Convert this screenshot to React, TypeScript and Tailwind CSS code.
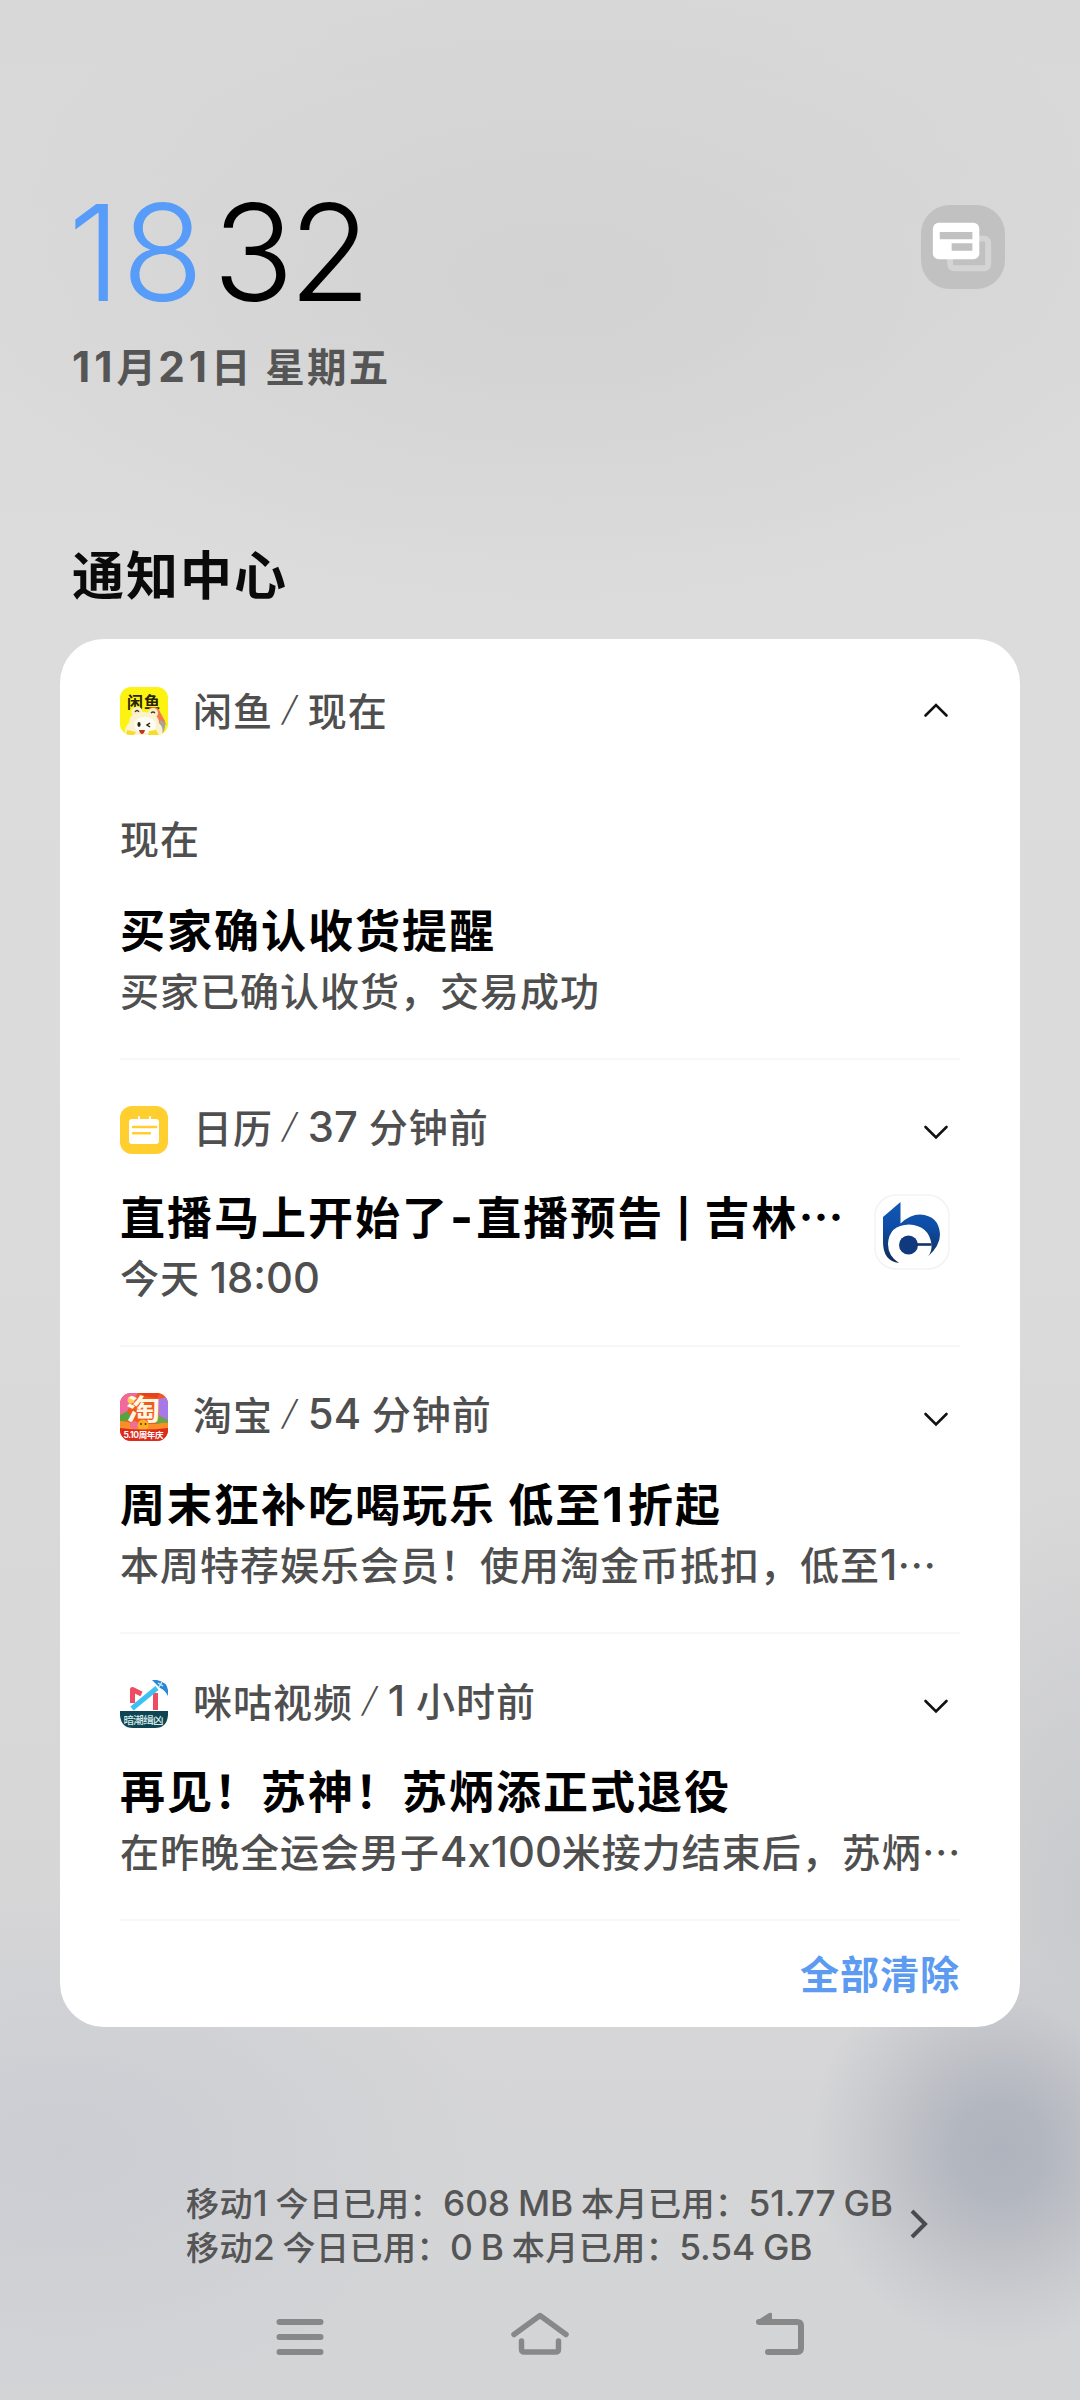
import { ReactNode } from 'react';

// Digits and latin letters are set in Inter, slightly larger than the CJK glyphs
function Mixed({ text }: { text: string }) {
  return (
    <>
      {text.split(/([A-Za-z0-9.:]+|-|\|)/).map((part, i) => {
        if (i % 2 === 0) return part;
        if (part === '|') {
          return (
            <span key={i} className="relative -top-[3px] font-['Inter'] text-[0.83em] leading-none">
              |
            </span>
          );
        }
        if (part === '-') {
          return (
            <span key={i} className="mx-[1px] font-['Inter'] text-[1.1em] leading-none">
              -
            </span>
          );
        }
        return (
          <span key={i} className="font-['Inter'] text-[1.07em] leading-none tracking-[var(--latin,0px)]">
            {part}
          </span>
        );
      })}
    </>
  );
}

function XianyuIcon() {
  return (
    <svg viewBox="0 0 48 48" className="size-12 shrink-0">
      <defs>
        <clipPath id="xy">
          <rect width="48" height="48" rx="11" />
        </clipPath>
      </defs>
      <g clipPath="url(#xy)">
        <rect width="48" height="48" fill="#fdf313" />
        <text x="24" y="20.500" textAnchor="middle" fontSize="16" fontWeight="700" fill="#26230a" fontFamily="Noto Sans CJK SC">
          闲鱼
        </text>
        <path d="M29 21q9-3 11 4l5 9-1 10-12-6z" fill="#f2794f" />
        <path d="M40 33l6 3-3 10-5-2z" fill="#a9a49a" />
        <circle cx="17" cy="25" r="5.500" fill="#f8efc6" />
        <circle cx="33" cy="26" r="5" fill="#f8efc6" />
        <path d="M5 48q-1-8 4-12 0-8 7-9 8-4 16 0 7 2 7 9 5 5 3 12z" fill="#fbf3d0" />
        <ellipse cx="25" cy="38" rx="11" ry="8" fill="#fffdf2" />
        <path d="M15 25q2-3 4 0M31 26q2-2 4 0" stroke="#4b3a1c" strokeWidth="1.300" fill="none" />
        <ellipse cx="19" cy="37.500" rx="1.600" ry="2.400" fill="#2c2118" />
        <path d="M30 36l-3 2 3 2" stroke="#2c2118" strokeWidth="1.500" fill="none" />
        <path d="M19 43h6q-1 4-3 4t-3-4z" fill="#c2321f" />
        <path d="M7 43l9 2-2 3H6zM29 44l7-1 3 5H28z" fill="#f7dc2c" />
      </g>
    </svg>
  );
}

function CalendarIcon() {
  return (
    <svg viewBox="0 0 48 48" className="size-12 shrink-0">
      <rect width="48" height="48" rx="12" fill="#ffcf2f" />
      <rect x="9" y="13" width="30" height="25" rx="3" fill="#fff" />
      <path d="M19 11v4M30 11v4" stroke="#fff" strokeWidth="2" strokeLinecap="round" />
      <path d="M13 21h23M13 27.200h17" stroke="#ffcf2f" strokeWidth="2.400" strokeLinecap="round" />
    </svg>
  );
}

function TaobaoIcon() {
  return (
    <svg viewBox="0 0 48 48" className="size-12 shrink-0 overflow-visible">
      <defs>
        <clipPath id="tb">
          <rect width="48" height="48" rx="11" />
        </clipPath>
      </defs>
      <g clipPath="url(#tb)">
        <rect width="48" height="48" fill="#f2581d" />
        <path d="M0 0h18L6 20l-6 6z" fill="#f0699c" />
        <path d="M38 6q8-2 10-2v26l-9-4z" fill="#a678e8" />
        <path d="M20 0h20l-3 5-14-2z" fill="#e8421c" />
        <path d="M0 22l8-4 3 8-11 4z" fill="#58a33b" />
        <path d="M38 22l10 5v8l-12-4z" fill="#6aa54a" />
        <path d="M0 28q8 0 12 3h26q5-2 10-1v8H0z" fill="#f98f26" />
        <circle cx="11" cy="7" r="3.500" fill="#ffd14a" />
      </g>
      <text
        transform="translate(24 27) scale(1.220 1)"
        textAnchor="middle"
        fontSize="28"
        fontWeight="700"
        fill="#fff8e4"
        fontFamily="Noto Sans CJK SC"
      >
        淘
      </text>
      <g clipPath="url(#tb)">
        <circle cx="14" cy="32" r="4" fill="#ef6d96" />
        <circle cx="23" cy="32" r="5.500" fill="#fbae22" />
        <circle cx="21" cy="31" r="0.900" fill="#5b2508" />
        <circle cx="25.500" cy="31" r="0.900" fill="#5b2508" />
        <path d="M0 35q24 3 48 0v13H0z" fill="#dc2a1b" />
        <text x="24" y="45" textAnchor="middle" fontSize="8.500" fontWeight="700" fill="#fff" textLength="41" fontFamily="Inter, Noto Sans CJK SC">
          5.10周年庆
        </text>
      </g>
    </svg>
  );
}

function MiguIcon() {
  return (
    <svg viewBox="0 0 48 48" className="size-12 shrink-0">
      <path d="M0 31h48v4q-1 13-13 13H13Q1 48 0 35z" fill="#0f4552" />
      <path d="M12.500 23V9.500l9 4.500" stroke="#ee4c62" strokeWidth="5" fill="none" strokeLinejoin="round" />
      <path d="M35.500 30V13" stroke="#ee4c62" strokeWidth="5" />
      <path d="M12 28.500L37 8" stroke="#3fc0f2" strokeWidth="5" />
      <path d="M32 0h5q10 2 11 10v6q-3-6-8-8z" fill="#2b87d3" />
      <path d="M38 3l5 3M42 2l-3 5" stroke="#d7efff" strokeWidth="1.200" />
      <text x="24" y="44" textAnchor="middle" fontSize="10.500" fontWeight="500" fill="#d9ecec" textLength="41" fontFamily="Noto Sans CJK SC">
        暗潮缉凶
      </text>
    </svg>
  );
}

function BankLogo() {
  return (
    <svg viewBox="0 0 76 76" className="mr-[10px] size-[76px] shrink-0">
      <defs>
        <linearGradient id="bank" x1="0" y1="0" x2="0" y2="1">
          <stop offset="0" stopColor="#1258b4" />
          <stop offset="0.400" stopColor="#0d4da6" />
          <stop offset="1" stopColor="#132b55" />
        </linearGradient>
      </defs>
      <rect x="1" y="1" width="74" height="74" rx="21" fill="#fff" stroke="#f3f3f3" strokeWidth="1.500" />
      <path
        d="M9 23L26.500 8v21.500Q36 20.500 46 20.500q19 1 20 20 0 11-12 22 4-5 3.500-12Q55 31.500 35 30.500 15 31 14 50q0 12 11 19Q9 67 9 48z"
        fill="url(#bank)"
      />
      <circle cx="34.500" cy="51" r="9.500" fill="#103a7d" />
      <path d="M42 50.500h15.500" stroke="#123467" strokeWidth="2.600" />
    </svg>
  );
}

function Chevron({ up }: { up?: boolean }) {
  return (
    <svg viewBox="0 0 26 16" className={up ? 'mr-[11px] mb-[3px] ml-auto h-4 w-[26px]' : 'mt-[3px] mr-[11px] ml-auto h-4 w-[26px]'}>
      <path
        d={up ? 'M2.500 13.500L13 3l10.500 10.500' : 'M2.500 3L13 13.500 23.500 3'}
        stroke="#111"
        strokeWidth="2.600"
        strokeLinecap="round"
        fill="none"
      />
    </svg>
  );
}

type Notification = {
  icon: ReactNode;
  app: string;
  time: string;
  title: string;
  body: string;
  expanded?: boolean;
  logo?: ReactNode;
};

const notifications: Notification[] = [
  {
    icon: <XianyuIcon />,
    app: '闲鱼',
    time: '现在',
    title: '买家确认收货提醒',
    body: '买家已确认收货，交易成功',
    expanded: true,
  },
  {
    icon: <CalendarIcon />,
    app: '日历',
    time: '37 分钟前',
    title: '直播马上开始了-直播预告 | 吉林…',
    body: '今天 18:00',
    logo: <BankLogo />,
  },
  {
    icon: <TaobaoIcon />,
    app: '淘宝',
    time: '54 分钟前',
    title: '周末狂补吃喝玩乐 低至1折起',
    body: '本周特荐娱乐会员！使用淘金币抵扣，低至1…',
  },
  {
    icon: <MiguIcon />,
    app: '咪咕视频',
    time: '1 小时前',
    title: '再见！苏神！苏炳添正式退役',
    body: '在昨晚全运会男子4x100米接力结束后，苏炳…',
  },
];

function NotificationItem({ item }: { item: Notification }) {
  return (
    <div className="border-b-2 border-[#f7f7f7] pt-[46px] pb-[39px] text-[39px] font-medium tracking-[1px] text-[#4f4f4f]">
      <div className="flex h-12 items-center whitespace-pre">
        {item.icon}
        <div className={item.expanded ? 'mb-[5px] ml-[25px] flex items-center' : 'mb-[8px] ml-[25px] flex items-center'}>
          <span className="leading-[44px]">{item.app}</span>
          <span className="mr-[11px] ml-[11px] -skew-x-[14deg] font-['Inter'] text-[34px] leading-[44px] font-light">/</span>
          <span className="leading-[44px] [word-spacing:1px]">
            <Mixed text={item.time} />
          </span>
        </div>
        <Chevron up={item.expanded} />
      </div>
      {item.expanded && <div className="mt-[72px] h-[60px] leading-[60px]">现在</div>}
      <div className="mt-[32px] flex">
        <div className="grow whitespace-pre">
          <div className="h-[60px] text-[45px] leading-[60px] font-bold tracking-[2px] text-black [--latin:5px]">
            <Mixed text={item.title} />
          </div>
          <div className="h-[60px] leading-[60px]">
            <Mixed text={item.body} />
          </div>
        </div>
        {item.logo && <div className="pt-[8px]">{item.logo}</div>}
      </div>
    </div>
  );
}

export default function App() {
  return (
    <div className="flex h-[2400px] w-[1080px] flex-col bg-[#d8d8d8] bg-[radial-gradient(ellipse_190px_200px_at_1000px_2150px,#afb3bd_0%,#b3b7bf_25%,#bfc1c7_50%,#cbccd0_75%,transparent_100%),radial-gradient(ellipse_180px_420px_at_1080px_1900px,#c9cacd_0%,transparent_100%),radial-gradient(ellipse_420px_260px_at_60px_2150px,#cbcdd3_0%,transparent_100%),radial-gradient(ellipse_620px_330px_at_560px_280px,#d2d2d2_0%,transparent_100%),linear-gradient(#d8d8d8_0%,#dcdcdc_24%,#dbdbdb_50%,#d6d6d7_80%,#d3d4d6_100%)] font-['Noto_Sans_CJK_SC',sans-serif]">
      <header className="flex h-[400px] items-start justify-between pr-[75px] pl-[72px]">
        <div>
          <div className="mt-[172px] -ml-[4px] flex h-[160px] font-['Inter'] text-[134px] leading-[160px] font-light tracking-[-5px]">
            <span className="text-[#579cf8]">
              <span className="tracking-[1px]">1</span>8
            </span>
            <span className="ml-[14px] text-black">32</span>
          </div>
          <div className="mt-[3px] h-[60px] text-[39.500px] leading-[60px] font-bold tracking-[2.300px] whitespace-pre text-[#555] [--latin:4px] [word-spacing:1px]">
            <Mixed text="11月21日 星期五" />
          </div>
        </div>
        <svg viewBox="0 0 85 85" className="mt-[205px] size-[84px]">
          <rect width="85" height="85" rx="29" fill="#c1c1c1" />
          <rect x="29.500" y="34" width="38.500" height="30" rx="4" fill="none" stroke="#d4d4d4" strokeWidth="6" />
          <rect x="12" y="18" width="47" height="37" rx="6" fill="#fff" />
          <path d="M19 31h33M31 42.500h21" stroke="#c1c1c1" strokeWidth="7.500" />
        </svg>
      </header>

      <h1 className="mt-[133px] h-[80px] pl-[72px] text-[52px] leading-[80px] font-bold tracking-[2px] text-[#0a0a0a]">
        通知中心
      </h1>

      <main className="mx-[60px] mt-[26px] flex h-[1388px] flex-col rounded-[44px] bg-white px-[60px] pt-[2px]">
        {notifications.map((item) => (
          <NotificationItem key={item.app} item={item} />
        ))}
        <button className="mt-[21px] self-end text-[39px] leading-[60px] font-bold tracking-[1px] text-[#5c9bf0]">
          全部清除
        </button>
      </main>

      <div className="mt-[153px] flex items-center pl-[186px] text-[33px] tracking-[0.500px] whitespace-pre text-[#555] [--latin:-0.1px]">
        <div>
          <div className="h-11 leading-[44px] font-medium">
            <Mixed text="移动1 今日已用：608 MB 本月已用：51.77 GB" />
          </div>
          <div className="h-11 leading-[44px] font-medium">
            <Mixed text="移动2 今日已用：0 B 本月已用：5.54 GB" />
          </div>
        </div>
        <svg viewBox="0 0 20 34" className="ml-[16px] h-[34px] w-5">
          <path d="M3 4l13 13L3 30" stroke="#4b4b4f" strokeWidth="4" fill="none" />
        </svg>
      </div>

      <nav className="mt-[43px] flex items-center pl-[276px]" aria-label="navigation">
        <svg viewBox="0 0 48 46" className="h-[46px] w-12">
          <path d="M3.500 11h41M3.500 26h41M3.500 41h41" stroke="#888" strokeWidth="6" strokeLinecap="round" />
        </svg>
        <svg viewBox="0 0 60 46" className="ml-[186px] h-[46px] w-[60px]">
          <g stroke="#888" strokeWidth="5.500" strokeLinecap="round" strokeLinejoin="round" fill="none">
            <path d="M4 23.500L30 4.500l26 19" />
            <path d="M11.500 30v8q0 3 3 3h31q3 0 3-3v-8" />
          </g>
        </svg>
        <svg viewBox="0 0 50 46" className="ml-[185px] h-[46px] w-[50px]">
          <path d="M4 11h38q4 0 4 4v22q0 4-4 4H13" stroke="#888" strokeWidth="6" strokeLinecap="round" fill="none" />
          <path d="M1.500 10L14 2q3-1 3 1v9H3z" fill="#888" />
        </svg>
      </nav>
    </div>
  );
}
